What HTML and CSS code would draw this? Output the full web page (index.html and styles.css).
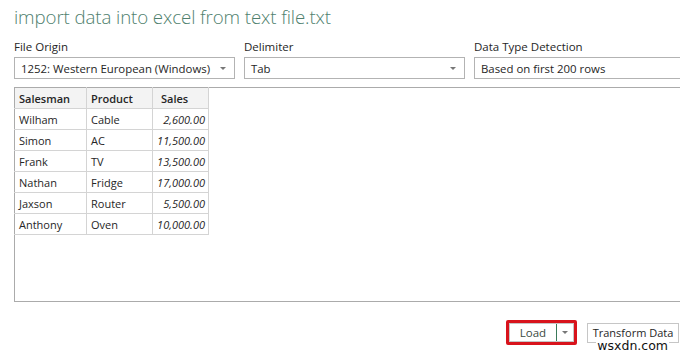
FILE: index.html
```html
<!DOCTYPE html>
<html>
<head>
<meta charset="utf-8">
<link rel="stylesheet" href="styles.css">
</head>
<body>
<div class="page">
  <h1 class="title">import data into excel from text file.txt</h1>
  <div class="fields">
    <div class="field">
      <div class="label">File Origin</div>
      <div class="select"><span>1252: Western European (Windows)</span><span class="caret"></span></div>
    </div>
    <div class="field">
      <div class="label">Delimiter</div>
      <div class="select"><span>Tab</span><span class="caret"></span></div>
    </div>
    <div class="field">
      <div class="label">Data Type Detection</div>
      <div class="select"><span>Based on first 200 rows</span></div>
    </div>
  </div>
  <div class="preview">
    <table class="grid">
      <thead>
        <tr><th class="c1">Salesman</th><th class="c2">Product</th><th class="c3">Sales</th></tr>
      </thead>
      <tbody>
        <tr><td>Wilham</td><td>Cable</td><td class="num">2,600.00</td></tr>
        <tr><td>Simon</td><td>AC</td><td class="num">11,500.00</td></tr>
        <tr><td>Frank</td><td>TV</td><td class="num">13,500.00</td></tr>
        <tr><td>Nathan</td><td>Fridge</td><td class="num">17,000.00</td></tr>
        <tr><td>Jaxson</td><td>Router</td><td class="num">5,500.00</td></tr>
        <tr><td>Anthony</td><td>Oven</td><td class="num">10,000.00</td></tr>
      </tbody>
    </table>
  </div>
  <div class="actions">
    <div class="highlight">
      <div class="split">
        <span class="split-main">Load</span>
        <span class="split-arrow"><span class="caret"></span></span>
      </div>
    </div>
    <div class="btn">Transform Data</div>
  </div>
  <div class="watermark">wsxdn.com</div>
</div>
</body>
</html>
```

FILE: styles.css
```css
html, body {
  margin: 0;
  padding: 0;
  background: #ffffff;
  overflow: hidden;
}
body {
  width: 680px;
  height: 356px;
  font-family: "Segoe UI", "Open Sans", "DejaVu Sans", sans-serif;
  color: #262626;
}
.page {
  position: relative;
  width: 680px;
  height: 356px;
  padding-left: 14px;
  box-sizing: border-box;
  overflow: hidden;
}
.title {
  margin: 0;
  padding-top: 4px;
  height: 33px;
  box-sizing: border-box;
  font-size: 18.7px;
  font-weight: 300;
  line-height: 26px;
  color: #4f7f6e;
  letter-spacing: -0.1px;
  white-space: nowrap;
}
.fields {
  display: flex;
  gap: 9px;
  width: 720px;
}
.field {
  flex: 0 0 221px;
}
.field:nth-child(3) {
  flex: 0 0 260px;
}
.label {
  font-size: 11.5px;
  line-height: 16px;
  height: 24px;
  padding-top: 6px;
  box-sizing: border-box;
  color: #262626;
}
.select {
  height: 22px;
  border: 1px solid #b3b3b3;
  box-sizing: border-box;
  display: flex;
  align-items: center;
  justify-content: space-between;
  padding: 0 8px 0 6px;
  font-size: 11.4px;
  color: #262626;
  white-space: nowrap;
}
.caret {
  display: inline-block;
  width: 0;
  height: 0;
  border-left: 3px solid transparent;
  border-right: 3px solid transparent;
  border-top: 3px solid #777777;
}
.preview {
  margin-top: 8px;
  width: 700px;
  height: 215px;
  border: 1px solid #ababab;
  box-sizing: border-box;
}
.grid {
  border-collapse: collapse;
  font-size: 11px;
  margin: -1px 0 0 -1px;
}
.grid th, .grid td {
  border: 1px solid #d4d4d4;
  height: 21px;
  padding: 0 4px 0 4px;
  box-sizing: border-box;
  text-align: left;
  white-space: nowrap;
  color: #262626;
}
.grid th {
  background: #f3f3f3;
  font-weight: 600;
  border-top-color: #ababab;
}
.grid th.c1, .grid td:first-child { border-left-color: #ababab; }
.c1 { width: 72px; }
.c2 { width: 66px; }
.c3 { width: 56px; padding-left: 8px !important; }
.grid td.num {
  text-align: right;
  font-style: italic;
  padding-right: 3px;
}
.actions {
  display: flex;
  justify-content: flex-end;
  align-items: center;
  gap: 10px;
  margin-top: 18px;
  padding-right: 1px;
}
.highlight {
  border: 3px solid #d8131c;
  border-radius: 2px;
  padding: 0;
}
.split {
  display: flex;
  height: 19px;
  width: 65px;
  border: 1px solid #c6c6c6;
  box-sizing: border-box;
  font-size: 11.5px;
  color: #3b4a42;
}
.split-main {
  flex: 1;
  display: flex;
  align-items: center;
  justify-content: center;
  border-right: 1px solid #3a7a5a;
}
.split-arrow {
  width: 16px;
  display: flex;
  align-items: center;
  justify-content: center;
}
.btn {
  height: 20px;
  width: 92px;
  border: 1px solid #c6c6c6;
  box-sizing: border-box;
  display: flex;
  align-items: center;
  justify-content: center;
  font-size: 11px;
  color: #262626;
  white-space: nowrap;
}
.watermark {
  position: absolute;
  right: 11px;
  bottom: 4px;
  font-family: "DejaVu Sans", sans-serif;
  font-size: 12.5px;
  line-height: 12px;
  color: #111111;
  background: #ffffff;
  padding: 0 1px;
}
```
